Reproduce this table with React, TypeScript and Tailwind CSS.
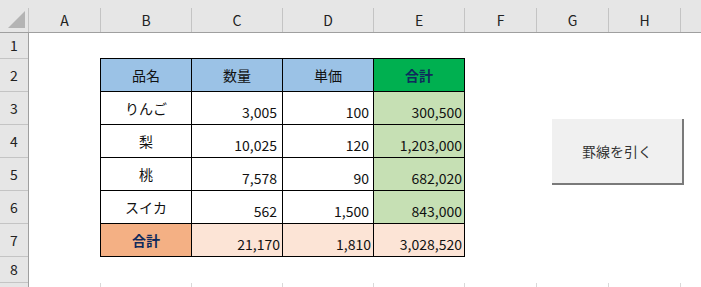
import React from 'react';

const COLS = [
  { label: 'A', w: 'w-[72px]' },
  { label: 'B', w: 'w-[91px]' },
  { label: 'C', w: 'w-[91px]' },
  { label: 'D', w: 'w-[91px]' },
  { label: 'E', w: 'w-[91px]' },
  { label: 'F', w: 'w-[72px]' },
  { label: 'G', w: 'w-[72px]' },
  { label: 'H', w: 'w-[72px]' },
];

const ROWS = [
  { n: '1', h: 'h-[26px]' },
  { n: '2', h: 'h-[33px]' },
  { n: '3', h: 'h-[33px]' },
  { n: '4', h: 'h-[33px]' },
  { n: '5', h: 'h-[33px]' },
  { n: '6', h: 'h-[33px]' },
  { n: '7', h: 'h-[33px]' },
  { n: '8', h: 'h-[26px]' },
];

const DATA = [
  { name: 'りんご', qty: '3,005', price: '100', total: '300,500' },
  { name: '梨', qty: '10,025', price: '120', total: '1,203,000' },
  { name: '桃', qty: '7,578', price: '90', total: '682,020' },
  { name: 'スイカ', qty: '562', price: '1,500', total: '843,000' },
];

const Label: React.FC<{ children: React.ReactNode; bg: string; bold?: boolean }> = ({ children, bg, bold }) => (
  <div
    className={`${bg} flex items-center justify-center text-[14px] leading-none ${
      bold ? 'font-bold text-[#0f2a5c]' : 'text-[#111]'
    }`}
  >
    {children}
  </div>
);

const Num: React.FC<{ children: React.ReactNode; bg: string; pr?: string }> = ({ children, bg, pr = 'pr-[4px]' }) => (
  <div className={`${bg} flex items-end justify-end pb-[5px] ${pr} text-[14px] leading-none text-[#111]`}>
    {children}
  </div>
);

export default function App() {
  return (
    <div className="relative w-[701px] h-[287px] overflow-hidden bg-white font-['Noto_Sans_CJK_JP','Noto_Sans',sans-serif]">
      {/* column headers */}
      <div className="flex h-[33px] bg-[#e6e6e6] border-b border-[#9f9f9f]">
        <svg width="29" height="32" className="shrink-0">
          <polygon points="8,28 25,11 25,28" fill="#b4b4b4" />
          <line x1="28.5" y1="8" x2="28.5" y2="32" stroke="#c4c4c4" />
        </svg>
        {COLS.map((c) => (
          <div key={c.label} className={`${c.w} shrink-0 h-full pt-[8px]`}>
            <div className="h-full border-r border-[#c4c4c4] flex items-center justify-center text-[14px] text-[#222]">
              {c.label}
            </div>
          </div>
        ))}
      </div>

      <div className="flex">
        {/* row headers */}
        <div className="w-[29px] shrink-0 h-[254px] bg-[#e6e6e6] border-r border-[#9f9f9f] flex flex-col">
          {ROWS.map((r) => (
            <div key={r.n} className={`${r.h} shrink-0 border-b border-[#c4c4c4] flex items-center justify-center text-[14px] text-[#222]`}>
              {r.n}
            </div>
          ))}
        </div>

        {/* sheet */}
        <div className="flex-1 flex flex-col">
          <div className="h-[25px]" />
          <div className="ml-[71px] w-fit grid grid-cols-[repeat(4,90px)] auto-rows-[32px] gap-px p-px bg-black">
            <Label bg="bg-[#9bc2e6]">品名</Label>
            <Label bg="bg-[#9bc2e6]">数量</Label>
            <Label bg="bg-[#9bc2e6]">単価</Label>
            <Label bg="bg-[#00b050]" bold>合計</Label>
            {DATA.map((d) => (
              <React.Fragment key={d.name}>
                <Label bg="bg-white">{d.name}</Label>
                <Num bg="bg-white" pr="pr-[5px]">{d.qty}</Num>
                <Num bg="bg-white" pr="pr-[4px]">{d.price}</Num>
                <Num bg="bg-[#c6e0b4]" pr="pr-[2px]">{d.total}</Num>
              </React.Fragment>
            ))}
            <Label bg="bg-[#f4b084]" bold>合計</Label>
            <Num bg="bg-[#fce4d6]" pr="pr-[2px]">21,170</Num>
            <Num bg="bg-[#fce4d6]" pr="pr-[2px]">1,810</Num>
            <Num bg="bg-[#fce4d6]" pr="pr-[2px]">3,028,520</Num>
          </div>
          <div className="h-[26px]" />
          <div className="flex h-[10px]">
            {COLS.map((c) => (
              <div key={c.label} className={`${c.w} shrink-0 border-r border-[#d9d9d9]`} />
            ))}
          </div>
        </div>
      </div>

      {/* shape button */}
      <div className="absolute left-[552px] top-[119px] w-[132px] h-[66px] bg-[#f0f0f0] border-r-2 border-b-2 border-[#7a7a7a] flex items-center justify-center text-[14px] text-[#333]">
        罫線を引く
      </div>
    </div>
  );
}
